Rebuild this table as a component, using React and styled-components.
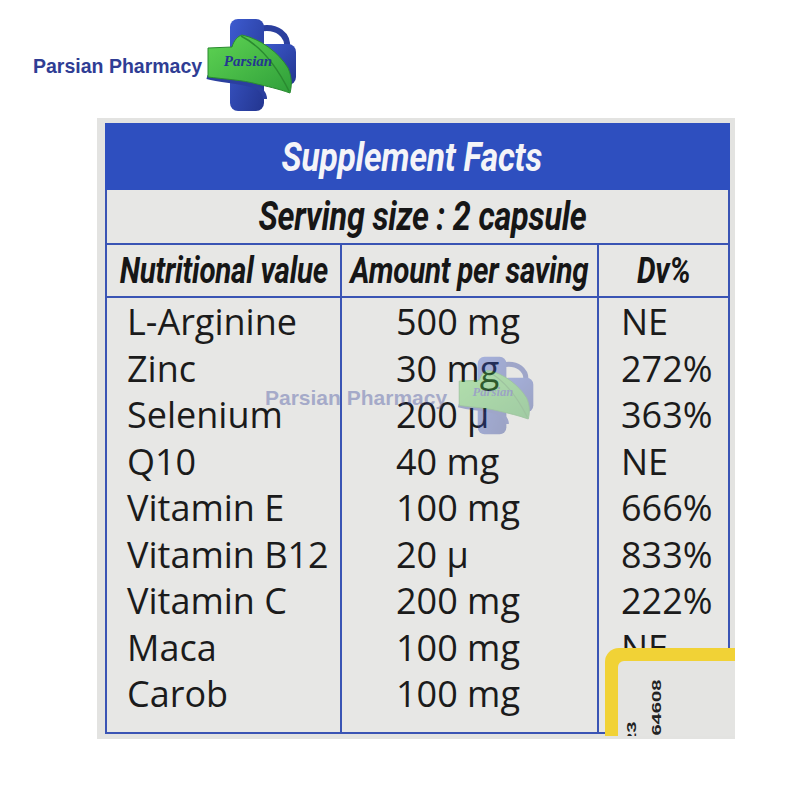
import styled, { createGlobalStyle } from "styled-components";

const GlobalStyle = createGlobalStyle`
  html, body {
    margin: 0;
    padding: 0;
    background: #ffffff;
  }
  body {
    font-family: "Open Sans", "Noto Sans", sans-serif;
  }
`;

const Page = styled.div`
  width: 800px;
  height: 800px;
  display: flex;
  flex-direction: column;
  background: #fff;
  overflow: hidden;
`;

const Brand = styled.header`
  height: 118px;
  display: flex;
  align-items: flex-start;
  padding-left: 33px;
  box-sizing: border-box;
`;

const BrandName = styled.span`
  margin-top: 55px;
  font-family: "Liberation Sans", Arial, sans-serif;
  font-weight: 700;
  font-size: 19.5px;
  color: #2f3d94;
`;

const LogoWrap = styled.div`
  margin-top: 17px;
  margin-left: 1px;
  width: 95px;
  height: 95px;
`;

const Panel = styled.section`
  position: relative;
  margin-left: 97px;
  width: 638px;
  height: 621px;
  box-sizing: border-box;
  padding: 5px 5px 5px 8px;
  background: #e3e3e1;
`;

const FactsTable = styled.div`
  height: 100%;
  display: flex;
  flex-direction: column;
  background: #e7e7e5;
  border: 2px solid #3a54b4;
  border-top: none;
  box-sizing: border-box;
`;

const TitleBar = styled.div`
  height: 67px;
  display: flex;
  align-items: center;
  justify-content: center;
  padding-right: 12px;
  background: #2e4fbf;
  margin: 0 -2px;
`;

const Condensed = styled.span`
  display: inline-block;
  font-family: "Roboto", "Liberation Sans", sans-serif;
  font-weight: 700;
  font-style: italic;
  font-size: ${(p) => p.$size || 30}px;
  color: ${(p) => p.$color || "#161616"};
  transform: scaleX(${(p) => p.$squeeze || 0.82});
  white-space: nowrap;
  letter-spacing: -0.3px;
`;

const ServingRow = styled.div`
  height: 55px;
  display: flex;
  align-items: center;
  justify-content: center;
  padding-left: 10px;
  border-bottom: 2px solid #3a54b4;
  box-sizing: border-box;
`;

const Columns = styled.div`
  display: grid;
  grid-template-columns: 235px 257px 1fr;
  flex: 1;
`;

const Column = styled.div`
  display: flex;
  flex-direction: column;
  border-right: ${(p) => (p.$last ? "none" : "2px solid #3a54b4")};
`;

const HeadCell = styled.div`
  height: 53px;
  display: flex;
  align-items: center;
  justify-content: center;
  border-bottom: 2px solid #3a54b4;
  box-sizing: border-box;
`;

const Rows = styled.div`
  padding-top: 1px;
  display: flex;
  flex-direction: column;
  padding-left: ${(p) => p.$indent}px;
`;

const Cell = styled.div`
  height: 46.5px;
  line-height: 46.5px;
  font-family: "Open Sans", "Noto Sans", sans-serif;
  font-size: 36px;
  color: #1b1b1b;
  white-space: nowrap;
`;

const Watermark = styled.div`
  position: absolute;
  left: 168px;
  top: 233px;
  display: flex;
  align-items: flex-start;
  opacity: 0.38;
  pointer-events: none;
`;

const WatermarkName = styled.span`
  margin-top: 35px;
  font-family: "Liberation Sans", Arial, sans-serif;
  font-weight: 700;
  font-size: 21px;
  color: #3d4a9c;
`;

const WatermarkLogo = styled.div`
  width: 80px;
  height: 88px;
  margin-left: 8px;
`;

const Sticker = styled.div`
  position: absolute;
  left: 508px;
  top: 530px;
  width: 130px;
  height: 88px;
  box-sizing: border-box;
  border-top: 13px solid #f1d236;
  border-left: 13px solid #f1d236;
  border-top-left-radius: 14px;
  background: #f1d236;
  overflow: hidden;
`;

const StickerFace = styled.div`
  position: relative;
  width: 100%;
  height: 100%;
  background: #e4e4e2;
  border-top-left-radius: 6px;
  overflow: hidden;
`;

const StickerCode = styled.span`
  position: absolute;
  left: ${(p) => p.$x}px;
  top: ${(p) => p.$y}px;
  transform: rotate(-90deg) scaleX(1.55);
  transform-origin: left top;
  font-family: "Liberation Sans", sans-serif;
  font-size: 13px;
  line-height: 1;
  font-weight: 700;
  color: #222;
  white-space: nowrap;
`;

function ParsianLogo({ id }) {
  return (
    <svg viewBox="0 0 95 95" width="100%" height="100%">
      <defs>
        <linearGradient id={`blue-${id}`} x1="0" y1="0" x2="1" y2="1">
          <stop offset="0" stopColor="#3d5bd0" />
          <stop offset="1" stopColor="#23358f" />
        </linearGradient>
        <linearGradient id={`green-${id}`} x1="0" y1="0" x2="1" y2="1">
          <stop offset="0" stopColor="#5fd453" />
          <stop offset="1" stopColor="#2f9f3a" />
        </linearGradient>
      </defs>
      <path
        d="M56 12 C74 8 86 18 84 32"
        fill="none"
        stroke="#2b3f9e"
        strokeWidth="6"
        strokeLinecap="round"
      />
      <rect x="27" y="2" width="34" height="92" rx="8" fill={`url(#blue-${id})`} />
      <rect x="55" y="27" width="38" height="41" rx="8" fill={`url(#blue-${id})`} />
      <path
        d="M4 60 C18 64 34 64 48 68 C58 71 62 76 62 82"
        fill="none"
        stroke="#2b3f9e"
        strokeWidth="4"
      />
      <path
        d="M5 31 L29 30 C31 23 35 19 39 18 C58 22 76 36 85 51 C89 60 89 68 87 76 C76 72 63 69 54 67 C40 63 20 62 5 60 Z"
        fill={`url(#green-${id})`}
        stroke="#2a8a30"
        strokeWidth="1"
      />
      <path
        d="M38 19 C56 28 72 46 86 74"
        fill="none"
        stroke="#2a8a30"
        strokeWidth="1.5"
      />
      <text
        x="45"
        y="49"
        textAnchor="middle"
        fontFamily="'Liberation Serif', serif"
        fontStyle="italic"
        fontWeight="700"
        fontSize="15"
        fill="#24378f"
      >
        Parsian
      </text>
    </svg>
  );
}

const NUTRIENTS = [
  ["L-Arginine", "500 mg", "NE"],
  ["Zinc", "30 mg", "272%"],
  ["Selenium", "200 µ", "363%"],
  ["Q10", "40 mg", "NE"],
  ["Vitamin E", "100 mg", "666%"],
  ["Vitamin B12", "20 µ", "833%"],
  ["Vitamin C", "200 mg", "222%"],
  ["Maca", "100 mg", "NE"],
  ["Carob", "100 mg", ""],
];

const COLUMNS = [
  { title: "Nutritional value", indent: 20 },
  { title: "Amount per saving", indent: 54 },
  { title: "Dv%", indent: 22 },
];

export default function App() {
  return (
    <>
      <GlobalStyle />
      <Page>
        <Brand>
          <BrandName>Parsian Pharmacy</BrandName>
          <LogoWrap>
            <ParsianLogo id="top" />
          </LogoWrap>
        </Brand>

        <Panel>
          <FactsTable>
            <TitleBar>
              <Condensed $size={41} $color="#f4f4f8">
                Supplement Facts
              </Condensed>
            </TitleBar>
            <ServingRow>
              <Condensed $size={40} $squeeze={0.81}>
                Serving size : 2 capsule
              </Condensed>
            </ServingRow>
            <Columns>
              {COLUMNS.map((col, i) => (
                <Column key={col.title} $last={i === COLUMNS.length - 1}>
                  <HeadCell>
                    <Condensed $size={36}>{col.title}</Condensed>
                  </HeadCell>
                  <Rows $indent={col.indent}>
                    {NUTRIENTS.map((row) => (
                      <Cell key={row[0]}>{row[i]}</Cell>
                    ))}
                  </Rows>
                </Column>
              ))}
            </Columns>
          </FactsTable>

          <Watermark>
            <WatermarkName>Parsian Pharmacy</WatermarkName>
            <WatermarkLogo>
              <ParsianLogo id="mark" />
            </WatermarkLogo>
          </Watermark>

          <Sticker>
            <StickerFace>
              <StickerCode $x={7} $y={83}>23</StickerCode>
              <StickerCode $x={32} $y={97}>1564608</StickerCode>
            </StickerFace>
          </Sticker>
        </Panel>
      </Page>
    </>
  );
}
